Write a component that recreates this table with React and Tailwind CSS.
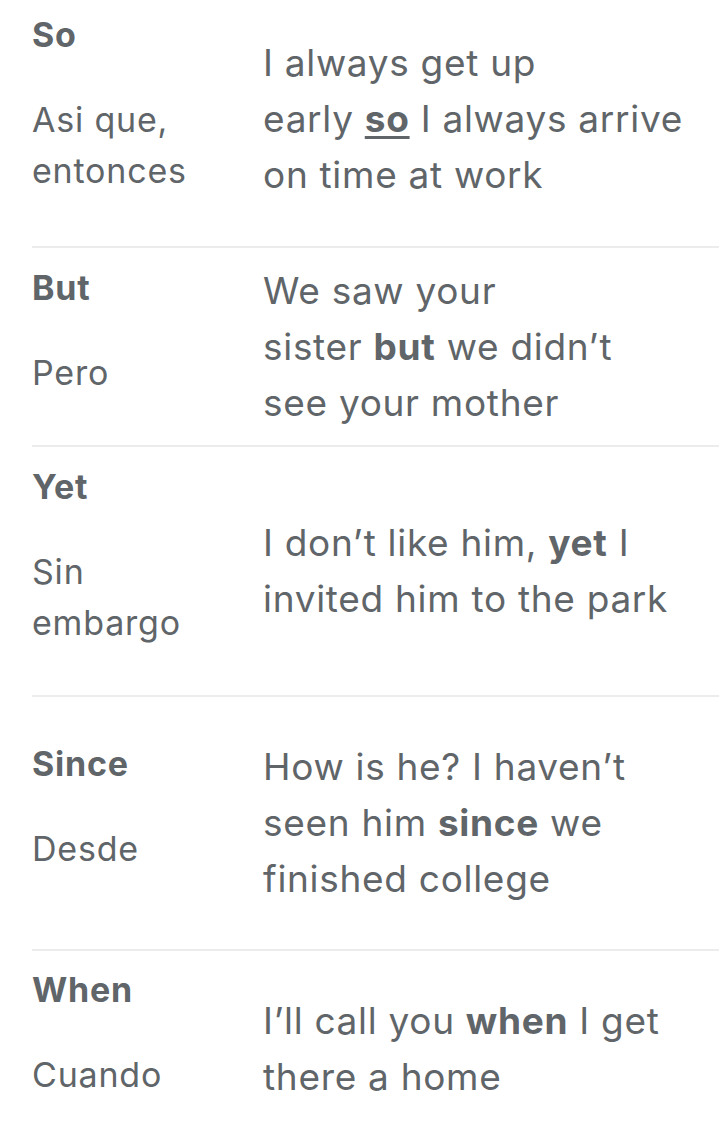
const rows = [
  {
    term: 'So',
    meaning: ['Asi que,', 'entonces'],
    lines: [
      ['I always get up'],
      ['early ', { b: 'so', u: true }, ' I always arrive'],
      ['on time at work'],
    ],
    box: 'h-[248px] pb-2 border-b-2',
  },
  {
    term: 'But',
    meaning: ['Pero'],
    lines: [
      ['We saw your'],
      ['sister ', { b: 'but' }, ' we didn’t'],
      ['see your mother'],
    ],
    box: 'h-[199px] border-b-2',
  },
  {
    term: 'Yet',
    meaning: ['Sin', 'embargo'],
    lines: [
      ['I don’t like him, ', { b: 'yet' }, ' I'],
      ['invited him to the park'],
    ],
    box: 'h-[250px] border-b-2',
  },
  {
    term: 'Since',
    meaning: ['Desde'],
    lines: [
      ['How is he? I haven’t'],
      ['seen him ', { b: 'since' }, ' we'],
      ['finished college'],
    ],
    box: 'h-[254px] border-b-2',
  },
  {
    term: 'When',
    meaning: ['Cuando'],
    lines: [
      ['I’ll call you ', { b: 'when' }, ' I get'],
      ['there a home'],
    ],
    box: 'h-[196px]',
  },
]

function Line({ parts }) {
  return (
    <p className="whitespace-pre">
      {parts.map((p, i) =>
        typeof p === 'string' ? (
          <span key={i}>{p}</span>
        ) : (
          <b
            key={i}
            className={`font-bold ${p.u ? 'underline decoration-[3px] underline-offset-[4px]' : ''}`}
          >
            {p.b}
          </b>
        )
      )}
    </p>
  )
}

export default function App() {
  return (
    <div className="min-h-screen bg-white pl-8 text-[#5f6568] font-['Inter',sans-serif] overflow-hidden">
      {rows.map(row => (
        <div key={row.term} className={`flex items-center border-[#ececec] ${row.box}`}>
          <div className="w-[231px] shrink-0 mb-[34px] text-[34px] leading-[51px] tracking-[0.8px]">
            <p className="font-bold mb-[34px]">{row.term}</p>
            {row.meaning.map(m => (
              <p key={m}>{m}</p>
            ))}
          </div>
          <div className="flex-1 text-[37px] leading-[56px] tracking-[0.7px]">
            {row.lines.map((l, i) => (
              <Line key={i} parts={l} />
            ))}
          </div>
        </div>
      ))}
    </div>
  )
}
